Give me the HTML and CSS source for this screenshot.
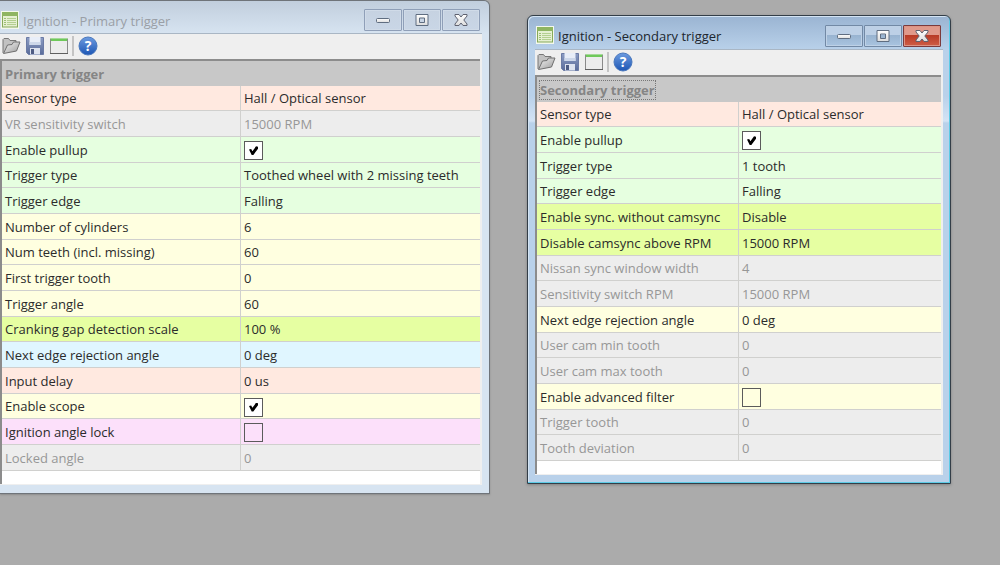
FILE: index.html
```html
<!DOCTYPE html>
<html lang="en">
<head>
<meta charset="utf-8">
<title>Ignition</title>
<link rel="stylesheet" href="styles.css">
</head>
<body>
<svg class="sprite" aria-hidden="true">
  <defs>
    <linearGradient id="g-folder" x1="0" y1="0" x2="1" y2="1"><stop offset="0" stop-color="#f4f4f4"/><stop offset="1" stop-color="#9a9a9a"/></linearGradient>
    <linearGradient id="g-disk" x1="0" y1="0" x2="0" y2="1"><stop offset="0" stop-color="#8c9dc4"/><stop offset="1" stop-color="#5a6c9a"/></linearGradient>
    <linearGradient id="g-help" x1="0" y1="0" x2="0" y2="1"><stop offset="0" stop-color="#6c9be0"/><stop offset="1" stop-color="#1d56b4"/></linearGradient>
    <linearGradient id="g-glyph" x1="0" y1="0" x2="0" y2="1"><stop offset="0" stop-color="#ffffff"/><stop offset="1" stop-color="#dcdcdc"/></linearGradient>
  </defs>
  <symbol id="i-app" viewBox="0 0 18 18">
    <rect width="18" height="18" fill="#f4f8ec"/>
    <rect x="1.5" y="1.5" width="15" height="14.5" fill="#e6f0d2" stroke="#86a95a"/>
    <rect x="1" y="1" width="16" height="4" fill="#8fb562"/>
    <path d="M3 7.500h2M3 9.500h2M3 11.500h2M3 13.500h2" stroke="#9dbd76"/>
    <path d="M6 7.500h9M6 9.500h9M6 11.500h9M6 13.500h9" stroke="#b4cf90"/>
  </symbol>
  <symbol id="i-open" viewBox="0 0 20 20">
    <path d="M2 17V3.500l1-1h4.500L9 4.500h6v4" fill="#c2c2c2" stroke="#777" stroke-linejoin="round"/>
    <path d="M2.500 17.500L6.500 9l4.500-.5L12.500 6h6.500L15.500 15z" fill="url(#g-folder)" stroke="#707070" stroke-linejoin="round"/>
  </symbol>
  <symbol id="i-save" viewBox="0 0 20 20">
    <path d="M1.500 1.500h17v17H3.500l-2-2z" fill="url(#g-disk)" stroke="#6b7ba5" stroke-linejoin="round"/>
    <rect x="4.500" y="1" width="11" height="8" fill="#e8eef8"/>
    <rect x="4.500" y="6" width="11" height="3" fill="#cdd8ea"/>
    <rect x="5" y="12" width="10" height="6.500" fill="#dde3ef"/>
    <rect x="6" y="13" width="3" height="5" fill="#4e5c83"/>
  </symbol>
  <symbol id="i-window" viewBox="0 0 20 20">
    <rect x="1.500" y="3.500" width="17" height="14" fill="#ececec" stroke="#8a8a8a"/>
    <rect x="2" y="3" width="16" height="2" fill="#6fc95a"/>
    <path d="M1 2.500h18" stroke="#a5d899"/>
    <path d="M1 17.500h18" stroke="#606060"/>
  </symbol>
  <symbol id="i-min" viewBox="0 0 16 14">
    <rect x="1.500" y="5.500" width="13" height="4" rx="1" fill="url(#g-glyph)" stroke="#5f6d80"/>
  </symbol>
  <symbol id="i-max" viewBox="0 0 16 14">
    <path fill-rule="evenodd" d="M2 1.500h12v11H2zM5.500 5v4.500h5V5z" fill="url(#g-glyph)" stroke="#5f6d80"/>
  </symbol>
  <symbol id="i-close" viewBox="0 0 16 14">
    <path d="M2 1.500h4l2 2.500 2-2.500h4v1.500L10.800 7l3.200 4v1.500h-4L8 10l-2 2.500H2V11l3.200-4L2 3z" fill="url(#g-glyph)" stroke="#5f6270" stroke-linejoin="round"/>
  </symbol>
</svg>

<main class="desktop">
  <section class="window primary" aria-label="Ignition - Primary trigger">
    <header class="titlebar">
      <svg class="app-icon"><use href="#i-app"/></svg>
      <h1 class="title">Ignition - Primary trigger</h1>
      <div class="controls">
        <button class="control" aria-label="Minimize"><svg><use href="#i-min"/></svg></button>
        <button class="control" aria-label="Maximize"><svg><use href="#i-max"/></svg></button>
        <button class="control" aria-label="Close"><svg><use href="#i-close"/></svg></button>
      </div>
    </header>
    <div class="client">
      <div class="toolbar">
        <button class="tool" aria-label="Open"><svg><use href="#i-open"/></svg></button>
        <button class="tool" aria-label="Save"><svg><use href="#i-save"/></svg></button>
        <button class="tool" aria-label="Window"><svg><use href="#i-window"/></svg></button>
        <span class="divider"></span>
        <button class="tool" aria-label="Help"><svg viewBox="0 0 20 20"><circle cx="10" cy="10" r="9" fill="url(#g-help)" stroke="#4a78bd"/><text x="10" y="15" text-anchor="middle" class="help-mark">?</text></svg></button>
      </div>
      <div class="panel">
        <table class="grid">
          <thead><tr><th colspan="2"><span class="group">Primary trigger</span></th></tr></thead>
          <tbody>
            <tr class="peach"><th>Sensor type</th><td>Hall / Optical sensor</td></tr>
            <tr class="off"><th>VR sensitivity switch</th><td>15000 RPM</td></tr>
            <tr class="green"><th><label for="pullup1">Enable pullup</label></th><td><input class="check" type="checkbox" id="pullup1" checked></td></tr>
            <tr class="green"><th>Trigger type</th><td>Toothed wheel with 2 missing teeth</td></tr>
            <tr class="green"><th>Trigger edge</th><td>Falling</td></tr>
            <tr class="yellow"><th>Number of cylinders</th><td>6</td></tr>
            <tr class="yellow"><th>Num teeth (incl. missing)</th><td>60</td></tr>
            <tr class="yellow"><th>First trigger tooth</th><td>0</td></tr>
            <tr class="yellow"><th>Trigger angle</th><td>60</td></tr>
            <tr class="lime"><th>Cranking gap detection scale</th><td>100 %</td></tr>
            <tr class="blue"><th>Next edge rejection angle</th><td>0 deg</td></tr>
            <tr class="peach"><th>Input delay</th><td>0 us</td></tr>
            <tr class="yellow"><th><label for="scope">Enable scope</label></th><td><input class="check" type="checkbox" id="scope" checked></td></tr>
            <tr class="pink"><th><label for="lock">Ignition angle lock</label></th><td><input class="check" type="checkbox" id="lock"></td></tr>
            <tr class="off"><th>Locked angle</th><td>0</td></tr>
          </tbody>
        </table>
      </div>
    </div>
  </section>

  <section class="window secondary" aria-label="Ignition - Secondary trigger">
    <header class="titlebar">
      <svg class="app-icon"><use href="#i-app"/></svg>
      <h1 class="title">Ignition - Secondary trigger</h1>
      <div class="controls">
        <button class="control" aria-label="Minimize"><svg><use href="#i-min"/></svg></button>
        <button class="control" aria-label="Maximize"><svg><use href="#i-max"/></svg></button>
        <button class="control close" aria-label="Close"><svg><use href="#i-close"/></svg></button>
      </div>
    </header>
    <div class="client">
      <div class="toolbar">
        <button class="tool" aria-label="Open"><svg><use href="#i-open"/></svg></button>
        <button class="tool" aria-label="Save"><svg><use href="#i-save"/></svg></button>
        <button class="tool" aria-label="Window"><svg><use href="#i-window"/></svg></button>
        <span class="divider"></span>
        <button class="tool" aria-label="Help"><svg viewBox="0 0 20 20"><circle cx="10" cy="10" r="9" fill="url(#g-help)" stroke="#4a78bd"/><text x="10" y="15" text-anchor="middle" class="help-mark">?</text></svg></button>
      </div>
      <div class="panel">
        <table class="grid">
          <thead><tr><th colspan="2"><span class="group focused">Secondary trigger</span></th></tr></thead>
          <tbody>
            <tr class="peach"><th>Sensor type</th><td>Hall / Optical sensor</td></tr>
            <tr class="green"><th><label for="pullup2">Enable pullup</label></th><td><input class="check" type="checkbox" id="pullup2" checked></td></tr>
            <tr class="green"><th>Trigger type</th><td>1 tooth</td></tr>
            <tr class="green"><th>Trigger edge</th><td>Falling</td></tr>
            <tr class="lime"><th>Enable sync. without camsync</th><td>Disable</td></tr>
            <tr class="lime"><th>Disable camsync above RPM</th><td>15000 RPM</td></tr>
            <tr class="off"><th>Nissan sync window width</th><td>4</td></tr>
            <tr class="off"><th>Sensitivity switch RPM</th><td>15000 RPM</td></tr>
            <tr class="yellow"><th>Next edge rejection angle</th><td>0 deg</td></tr>
            <tr class="off"><th>User cam min tooth</th><td>0</td></tr>
            <tr class="off"><th>User cam max tooth</th><td>0</td></tr>
            <tr class="yellow"><th><label for="filter">Enable advanced filter</label></th><td><input class="check" type="checkbox" id="filter"></td></tr>
            <tr class="off"><th>Trigger tooth</th><td>0</td></tr>
            <tr class="off"><th>Tooth deviation</th><td>0</td></tr>
          </tbody>
        </table>
      </div>
    </div>
  </section>
</main>
</body>
</html>
```
FILE: styles.css
```css
* { box-sizing: border-box; }
body {
  margin: 0;
  background: #ababab;
  color: #2b2b2b;
  font: 13px/20px "Open Sans", "Noto Sans", sans-serif;
}
.sprite { position: absolute; width: 0; height: 0; }
.desktop { position: relative; min-height: 100vh; overflow: hidden; }

.window {
  position: absolute;
  border: 1px solid #6f747a;
  border-radius: 6px 6px 0 0;
  padding: 0 7px 8px;
}
.primary {
  top: 0;
  left: 0;
  width: 49%;
  padding-left: 0;
  border-left: 0;
  border-top-left-radius: 0;
  background: linear-gradient(#c1cedd, #d7e4f1 33px);
  box-shadow: 0 1px 2px #8c8c8c;
}
.secondary {
  top: 15px;
  left: 52.7%;
  width: 42.4%;
  border-color: #333e48;
  background: linear-gradient(#9ab4d2, #b9d1ea 34px, #b9d1ea 80px, #d3e3f5 105px, #b9d1ea 107px);
  box-shadow: inset -1px -1px #5ccbe6, inset 1px 1px #d4e4f3, 0 1px 3px #808080;
}

.titlebar { display: flex; align-items: flex-start; height: 32px; padding: 8px 2px 0 0; }
.secondary .titlebar { height: 33px; padding-top: 9px; }
.app-icon { width: 18px; height: 18px; margin: 2px 4px 0 1px; flex: none; }
.title { margin: 2px 0 0; flex: 1; font-size: 13px; line-height: 20px; font-weight: 400; white-space: nowrap; color: #9a9fa6; }
.secondary .app-icon, .secondary .title { margin-top: 1px; }
.secondary .title { color: #20262e; }
.controls { display: flex; gap: 1px; }
.control {
  display: grid;
  place-items: center;
  width: 38px;
  height: 22px;
  padding: 0;
  border: 1px solid #8f9fb8;
  border-radius: 1px;
  background: linear-gradient(#c6d2e1, #c9d6e6);
  box-shadow: inset 0 0 0 1px #d0dbe8;
}
.control svg { width: 16px; height: 14px; }
.secondary .control { border-color: #7289a5; background: linear-gradient(#bdd0e6 45%, #98b3d0 46%, #a9c4e0); box-shadow: inset 0 0 0 1px #bed1e6; }
.secondary .close { border-color: #7b3a3c; background: linear-gradient(#e0998b 45%, #b83a26 46%, #cf5d45); box-shadow: inset 0 0 0 1px #dc9384; }

.client { border-top: 1px solid #a9b6c4; background: #efefef; padding: 0 2px 1px 0; }
.toolbar { display: flex; align-items: center; height: 25px; gap: 4px; padding: 0 0 2px 1px; }
.tool { display: block; width: 20px; height: 20px; padding: 0; border: 0; background: none; }
.tool svg { display: block; width: 20px; height: 20px; }
.divider { width: 2px; height: 20px; background: #c4c4c4; margin-left: -1px; }
.help-mark { font: 700 14px "Open Sans", sans-serif; fill: #fff; }

.panel { border: solid #8c8c8c; border-width: 2px 0 0 2px; background: #fff; padding-bottom: 13px; }
.grid { width: 100%; border-collapse: separate; border-spacing: 0; table-layout: fixed; }
.grid th, .grid td {
  height: 26px;
  padding: 0 3px;
  border-bottom: 1px solid #d0d0ce;
  text-align: left;
  font-size: 13px;
  line-height: 20px;
  font-weight: 400;
  white-space: nowrap;
}
.grid tbody tr:nth-child(3n+1) > * { height: 25px; }
.grid tbody th { border-right: 1px solid #d0d0ce; }
.grid thead th { height: 25px; padding: 0 2px; background: #c8c8c8; border-bottom: 0; color: #858585; font-weight: 700; }
.group { display: inline-block; padding: 0 1px; }
.focused { outline: 1px dotted #777; outline-offset: -1px; }

.peach { background: #ffe9e0; }
.green { background: #e6ffe0; }
.yellow { background: #ffffe0; }
.lime { background: #e6ffa2; }
.blue { background: #e0f6ff; }
.pink { background: #fce0fa; }
.off { background: #ededed; color: #979797; }

.check {
  appearance: none;
  display: grid;
  place-items: center;
  width: 19px;
  height: 19px;
  margin: 2px 0 0;
  border: 1px solid #5b5b5b;
}
.check:checked { background: #fff; }
.check:checked::after {
  content: "";
  width: 9px;
  height: 9px;
  background: #000;
  clip-path: polygon(0 38%, 24% 32%, 38% 58%, 78% 4%, 100% 8%, 100% 30%, 48% 100%, 30% 100%);
}
```
